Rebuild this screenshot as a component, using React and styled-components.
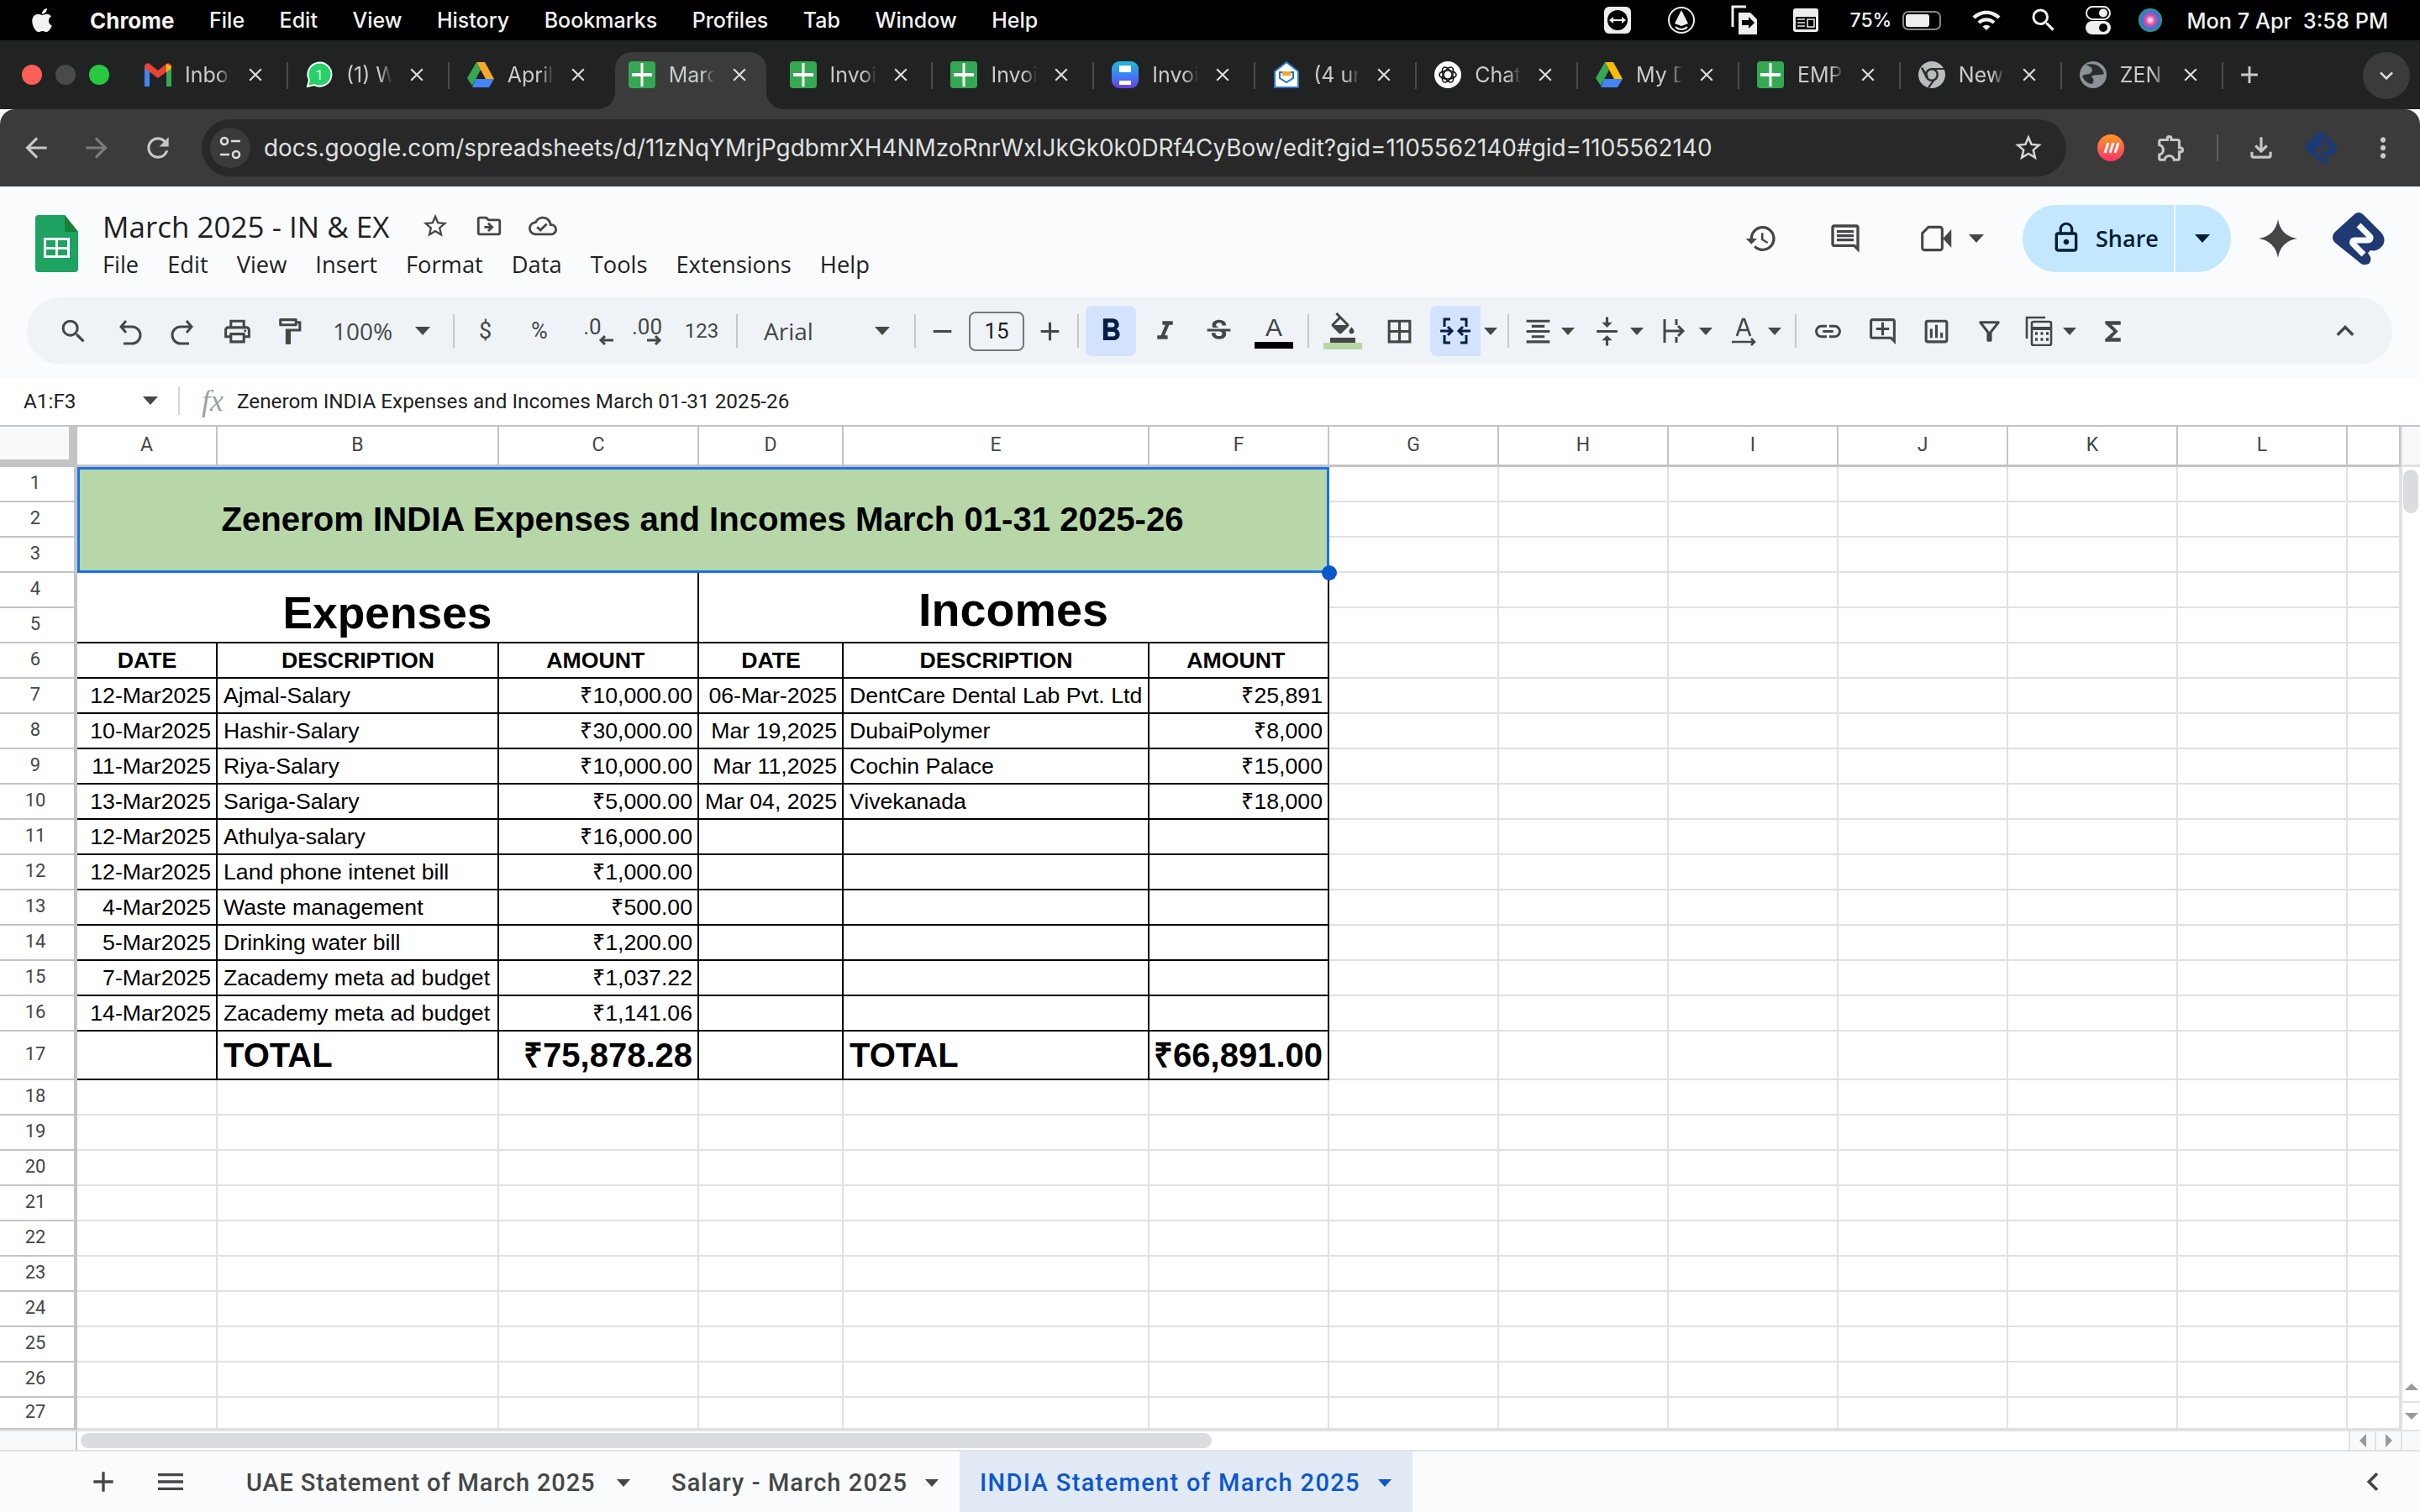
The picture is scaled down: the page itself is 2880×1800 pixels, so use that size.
import React from 'react'
import styled, { createGlobalStyle } from 'styled-components'
import { FaApple } from 'react-icons/fa'
import {
  MdSearch, MdOutlinePrint, MdOutlineFormatPaint, MdRemove, MdAdd,
  MdFormatBold, MdFormatItalic, MdStrikethroughS, MdOutlineFormatColorFill, MdBorderAll,
  MdFormatAlignCenter, MdVerticalAlignCenter, MdLink, MdOutlineAddComment, MdOutlineInsertChart,
  MdOutlineFilterAlt, MdFunctions, MdHistory, MdLockOutline, MdArrowBack,
  MdArrowForward, MdRefresh, MdStarBorder, MdMoreVert, MdOutlineFileDownload, MdOutlineExtension,
  MdKeyboardArrowUp, MdKeyboardArrowDown, MdKeyboardArrowLeft, MdClose, MdMenu,
  MdOutlineDriveFileMove, MdOutlineCloudDone, MdOutlineComment, MdWifi,
} from 'react-icons/md'

const GlobalStyle = createGlobalStyle`
  html, body { margin: 0; padding: 0; background: #fff; }
  * { box-sizing: border-box; }
`

const Page = styled.div`
  width: 2880px;
  height: 1800px;
  overflow: hidden;
  display: flex;
  flex-direction: column;
  background: #f9fbfd;
  font-family: Roboto, "Liberation Sans", sans-serif;
`

/* mac menu bar */
const MenuBar = styled.div`
  height: 48px;
  background: #000;
  color: #f2f2f2;
  display: flex;
  align-items: center;
  padding-right: 38px;
  font-family: Inter, sans-serif;
  font-size: 25px;
  font-weight: 500;
`
const AppleSlot = styled.div`
  width: 107px;
  padding-left: 34px;
  display: flex;
  font-size: 32px;
`
const MacMenu = styled.div`
  display: flex;
  gap: 41.5px;
  b { font-weight: 700; font-size: 26px; }
`
const StatusSlot = styled.div`
  width: ${p => p.$w}px;
  margin-left: ${p => p.$ml || 0}px;
  display: flex;
  justify-content: center;
  align-items: center;
`
const StatusPush = styled.div`
  margin-left: auto;
`
const StatusText = styled.div`
  margin-left: ${p => p.$ml || 0}px;
  font-size: ${p => p.$s || 25}px;
  white-space: pre;
`
const Battery = styled.div`
  width: 46px;
  height: 23px;
  margin-left: 13px;
  border: 2px solid #888;
  border-radius: 7px;
  padding: 2px;
  display: flex;
  div { width: 72%; background: #eee; border-radius: 3px; }
`

/* chrome tabs */
const TabStrip = styled.div`
  height: 82px;
  background: #212323;
  display: flex;
  align-items: flex-end;
`
const Lights = styled.div`
  width: 150px;
  height: 82px;
  padding: 0 0 0 26px;
  display: flex;
  gap: 16px;
  align-items: center;
`
const Light = styled.span`
  width: 24px;
  height: 24px;
  border-radius: 50%;
  background: ${p => p.$c};
`
const Tab = styled.div`
  position: relative;
  width: 179.9px;
  height: 68px;
  margin: 0 6px;
  padding: 0 0 14px 16px;
  display: flex;
  align-items: center;
  border-radius: 20px 20px 0 0;
  background: ${p => (p.$active ? '#3b3b3b' : 'transparent')};
  color: #c9cbcb;
  font-family: Inter, sans-serif;
  font-size: 25px;
  &::after {
    content: '';
    display: ${p => (p.$sep ? 'block' : 'none')};
    position: absolute;
    right: -7px;
    top: 12px;
    width: 2px;
    height: 32px;
    background: #4a4c4c;
  }
`
const TabCorner = styled.span`
  position: absolute;
  bottom: 0;
  ${p => (p.$right ? 'right: -20px' : 'left: -20px')};
  width: 20px;
  height: 20px;
  background: radial-gradient(circle at ${p => (p.$right ? '100% 0' : '0 0')}, #212323 19.5px, #3b3b3b 20px);
`
const TabTitle = styled.div`
  width: 55px;
  margin-left: 16px;
  white-space: nowrap;
  overflow: hidden;
  -webkit-mask-image: linear-gradient(90deg, #000 72%, transparent);
  mask-image: linear-gradient(90deg, #000 72%, transparent);
`
const TabClose = styled.div`
  margin-left: 16px;
  display: flex;
  color: #dcdcdc;
  font-size: 26px;
`
const NewTab = styled.div`
  margin-left: 6px;
  height: 82px;
  width: 52px;
  display: flex;
  align-items: center;
  justify-content: center;
  color: #c9cbcb;
  font-size: 34px;
`
const TabSearch = styled.div`
  margin-left: auto;
  margin-right: 12px;
  align-self: flex-start;
  margin-top: 14px;
  width: 56px;
  height: 56px;
  border-radius: 28px;
  background: #3b3b3b;
  color: #dcdcdc;
  font-size: 32px;
  display: flex;
  align-items: center;
  justify-content: center;
`

/* chrome address bar */
const AddressBar = styled.div`
  height: 92px;
  background: #3b3b3b;
  border-radius: 18px 18px 0 0;
  display: flex;
  align-items: center;
  padding-left: 7px;
`
const NavBtn = styled.div`
  width: ${p => p.$w}px;
  margin-left: ${p => p.$ml || 0}px;
  display: flex;
  justify-content: center;
  color: ${p => p.$c || '#c7c7c7'};
  font-size: 38px;
`
const Omnibox = styled.div`
  width: 2219px;
  height: 68px;
  margin-left: 15px;
  border-radius: 34px;
  background: #282828;
  padding: 0 26px 0 10px;
  display: flex;
  align-items: center;
  color: #dfe1e1;
  font-family: Inter, sans-serif;
  font-size: 27.9px;
`
const SiteChip = styled.div`
  width: 48px;
  height: 48px;
  border-radius: 50%;
  background: #3b3b3b;
  display: flex;
  align-items: center;
  justify-content: center;
`
const UrlText = styled.div`
  margin-left: 16px;
`
const OmniStar = styled.div`
  margin-left: auto;
  display: flex;
  font-size: 38px;
  color: #d5d5d5;
`
const ChromeSep = styled.div`
  width: 2px;
  height: 32px;
  margin-left: ${p => p.$l}px;
  background: #5f5f5f;
`

/* docs header */
const DocHeader = styled.div`
  height: 132px;
  padding-left: 42px;
  display: flex;
  align-items: flex-start;
`
const DocLogo = styled.div`
  margin-top: 34px;
  display: flex;
`
const DocTitleBlock = styled.div`
  margin-left: 29px;
  padding-top: 24px;
`
const DocTitleRow = styled.div`
  display: flex;
  align-items: center;
  height: 46px;
`
const DocTitle = styled.div`
  font-family: "Open Sans", sans-serif;
  font-size: 35px;
  color: #1f1f1f;
  width: 343px;
  white-space: nowrap;
`
const TitleIcon = styled.div`
  width: 64px;
  display: flex;
  justify-content: center;
  font-size: 34px;
  color: #444746;
  margin-left: ${p => p.$ml || 0}px;
`
const DocMenu = styled.div`
  display: flex;
  gap: 34px;
  margin-top: 2px;
  height: 40px;
  align-items: center;
  font-family: "Open Sans", sans-serif;
  font-size: 27.3px;
  color: #1f1f1f;
`
const HeadActions = styled.div`
  margin-left: auto;
  margin-top: 22px;
  height: 80px;
  padding-right: 42px;
  display: flex;
  align-items: center;
`
const HeadBtn = styled.div`
  width: ${p => p.$w || 40}px;
  margin-left: ${p => p.$ml || 0}px;
  display: flex;
  justify-content: center;
  color: #444746;
  font-size: ${p => p.$s || 44}px;
`
const Caret = styled.span`
  display: inline-block;
  flex: none;
  width: 0;
  height: 0;
  border-left: ${p => p.$s || 9}px solid transparent;
  border-right: ${p => p.$s || 9}px solid transparent;
  border-top: ${p => (p.$s || 9) + 1}px solid ${p => p.$c || '#444746'};
`
const ShareButton = styled.div`
  width: 248px;
  height: 80px;
  margin-left: 43px;
  border-radius: 40px;
  overflow: hidden;
  background: #c2e7ff;
  color: #001d35;
  display: flex;
  align-items: stretch;
`
const ShareMain = styled.div`
  width: 182px;
  padding: 0 0 2px 32px;
  display: flex;
  align-items: center;
  font-family: "Open Sans", sans-serif;
  font-size: 27px;
  font-weight: 600;
  border-right: 2px solid #f4fbff;
  svg { font-size: 40px; margin-right: 15px; }
`
const ShareCaret = styled.div`
  flex: 1;
  display: flex;
  align-items: center;
  justify-content: center;
  padding-right: 2px;
`

/* sheets toolbar */
const Toolbar = styled.div`
  height: 80px;
  margin: 0 33px 16px 32px;
  padding: 0 25px 0 17px;
  border-radius: 40px;
  background: #eff3f8;
  display: flex;
  align-items: center;
`
const ToolBtn = styled.div`
  width: ${p => p.$w}px;
  height: 60px;
  margin-left: ${p => p.$ml || 0}px;
  padding-top: ${p => p.$pt || 0}px;
  display: flex;
  align-items: center;
  justify-content: center;
  flex: none;
  font-size: ${p => p.$s || 37}px;
  color: ${p => (p.$on ? '#041e49' : '#444746')};
  background: ${p => (p.$on ? '#d3e3fd' : 'transparent')};
  border-radius: ${p => p.$r || '8px'};
`
const ToolLabel = styled.span`
  font-family: Roboto, sans-serif;
  font-size: ${p => p.$s || 27}px;
  color: #444746;
`
const ToolSelect = styled.div`
  width: ${p => p.$w}px;
  padding: 0 ${p => p.$pr}px 0 ${p => p.$pl}px;
  display: flex;
  align-items: center;
  justify-content: space-between;
  flex: none;
  font-family: "Open Sans", sans-serif;
  font-size: 28px;
  color: #444746;
`
const ToolSep = styled.div`
  width: 2px;
  height: 40px;
  flex: none;
  margin: 0 ${p => p.$r}px 0 ${p => p.$l}px;
  background: #c7c7c7;
`
const SizeBox = styled.div`
  width: 66px;
  height: 47px;
  border: 2px solid #747775;
  border-radius: 8px;
  display: flex;
  align-items: center;
  justify-content: center;
  font-family: Roboto, sans-serif;
  font-size: 26px;
  color: #1f1f1f;
`
const ColorTool = styled.div`
  display: flex;
  flex-direction: column;
  align-items: center;
  line-height: 1;
  font-size: 36px;
  color: #444746;
`
const ColorGlyph = styled.span`
  height: 34px;
  font-family: "Liberation Sans", sans-serif;
  font-size: 30px;
  line-height: 34px;
`
const ColorBar = styled.span`
  width: 46px;
  height: 8px;
  background: ${p => p.$c};
`
const Decimal = styled.div`
  display: flex;
  flex-direction: column;
  align-items: flex-end;
  padding-left: ${p => (p.$narrow ? 14 : 0)}px;
  font-family: Roboto, sans-serif;
  font-size: 26px;
  line-height: 26px;
  color: #444746;
  span { margin-right: ${p => (p.$narrow ? 14 : 0)}px; }
  svg { margin-top: -4px; }
`

/* formula bar */
const FormulaBar = styled.div`
  height: 56px;
  padding-bottom: 2px;
  background: #fff;
  display: flex;
  align-items: center;
  font-family: Roboto, sans-serif;
  font-size: 24.3px;
  color: #1f1f1f;
`
const NameBox = styled.div`
  width: 212px;
  padding: 0 24px 0 28px;
  display: flex;
  align-items: center;
  justify-content: space-between;
`
const FormulaSep = styled.div`
  width: 2px;
  height: 34px;
  background: #d5d5d5;
`
const FxMark = styled.div`
  width: 68px;
  padding-right: 16px;
  text-align: right;
  font-family: "Liberation Serif", serif;
  font-style: italic;
  font-size: 36px;
  color: #9aa0a6;
`

/* the sheet */
const SheetArea = styled.div`
  height: 1196px;
  border-top: 2px solid #c4c4c4;
  display: flex;
  background: #fff;
`
const Grid = styled.div`
  width: 2857px;
  display: grid;
  grid-template-columns: 92px 167px 335px 238px 172px 364px 214px repeat(6, 202px) 63px;
  grid-template-rows: 48px repeat(16, 42px) 58px repeat(9, 42px) 38px;
  overflow: hidden;
  font-family: "Liberation Sans", Arial, sans-serif;
  color: #000;
`
const Corner = styled.div`
  background: #f8f9fa;
  border-right: 10px solid #c4c4c4;
  border-bottom: 9px solid #c4c4c4;
`
const ColHead = styled.div`
  display: flex;
  align-items: center;
  justify-content: center;
  padding-bottom: 2px;
  background: #fff;
  border-right: 2px solid #c4c4c4;
  border-bottom: 3px solid #c4c4c4;
  font-family: Roboto, sans-serif;
  font-size: 23px;
  color: #444746;
`
const RowHead = styled.div`
  display: flex;
  align-items: center;
  justify-content: center;
  padding: 0 4px 4px 0;
  background: #fff;
  border-right: 4px solid #c4c4c4;
  border-bottom: 2px solid #c4c4c4;
  font-family: Roboto, sans-serif;
  font-size: 22px;
  color: #444746;
`
const Blank = styled.div`
  background: #fff;
  border-right: 2px solid #e1e1e1;
  border-bottom: 2px solid #e1e1e1;
`
const Cell = styled.div`
  display: flex;
  align-items: center;
  justify-content: ${p => p.$align || 'flex-start'};
  padding: 0 6px 0 7px;
  border-right: 2px solid #000;
  border-bottom: 2px solid #000;
  font-size: ${p => p.$size || 26.67}px;
  font-weight: ${p => (p.$bold ? 700 : 400)};
  line-height: 1;
  white-space: pre;
  overflow: hidden;
`
const TitleCell = styled.div`
  grid-column: span 6;
  grid-row: span 3;
  position: relative;
  display: flex;
  align-items: center;
  justify-content: center;
  padding-right: 2px;
  background: #b7d7a8;
  box-shadow: inset 0 0 0 3px #1a73e8;
  font-size: 40.15px;
  font-weight: 700;
`
const SelectHandle = styled.span`
  position: absolute;
  right: -9px;
  bottom: -9px;
  width: 18px;
  height: 18px;
  border-radius: 50%;
  background: #0b57d0;
`
const SectionCell = styled.div`
  grid-column: span 3;
  grid-row: span 2;
  display: flex;
  align-items: flex-end;
  justify-content: center;
  padding-bottom: ${p => p.$pb}px;
  border-right: 2px solid #000;
  border-bottom: 2px solid #000;
  font-size: ${p => p.$size}px;
  font-weight: 700;
  line-height: 1.15;
`
const VScroll = styled.div`
  width: 23px;
  display: flex;
  flex-direction: column;
  border-left: 2px solid #e1e1e1;
`
const VCorner = styled.div`
  height: 48px;
  background: #f8f9fa;
  border-bottom: 3px solid #e1e1e1;
`
const VThumb = styled.div`
  width: 18px;
  height: 52px;
  margin: 3px 0 0 1px;
  border-radius: 9px;
  background: #dadce0;
`
const ScrollArrow = styled.div`
  height: 34px;
  display: flex;
  align-items: center;
  justify-content: center;
  border-top: ${p => (p.$top ? '2px solid #e1e1e1' : 'none')};
  margin-top: ${p => (p.$push ? 'auto' : 0)};
`
const TriV = styled.span`
  width: 0;
  height: 0;
  border-left: 8px solid transparent;
  border-right: 8px solid transparent;
  ${p => (p.$up ? 'border-bottom' : 'border-top')}: 8px solid #9a9a9a;
`
const TriH = styled.span`
  width: 0;
  height: 0;
  border-top: 8px solid transparent;
  border-bottom: 8px solid transparent;
  ${p => (p.$left ? 'border-right' : 'border-left')}: 8px solid #9a9a9a;
`
const HScroll = styled.div`
  height: 24px;
  display: flex;
  background: #fff;
  border-top: 2px solid #e1e1e1;
`
const HStub = styled.div`
  width: 92px;
  background: #f8f9fa;
  border-right: 2px solid #c4c4c4;
`
const HThumb = styled.div`
  width: 1346px;
  height: 18px;
  margin: 2px 0 0 4px;
  border-radius: 9px;
  background: #dadce0;
`
const HArrow = styled.div`
  width: 31px;
  margin-left: ${p => (p.$push ? 'auto' : 0)};
  display: flex;
  align-items: center;
  justify-content: center;
  background: #f8f9fa;
  border-left: 2px solid #e1e1e1;
`
const HCorner = styled.div`
  width: 23px;
  background: #f8f9fa;
  border-left: 2px solid #e1e1e1;
`

/* sheet tabs */
const SheetBar = styled.div`
  height: 74px;
  border-top: 2px solid #e0e3e0;
  display: flex;
  align-items: stretch;
  font-family: Roboto, sans-serif;
  font-size: 29px;
  font-weight: 500;
  color: #444746;
`
const SheetIcon = styled.div`
  width: 60px;
  margin-left: ${p => p.$ml}px;
  display: flex;
  align-items: center;
  justify-content: center;
  font-size: 40px;
  color: #444746;
`
const SheetTab = styled.div`
  width: ${p => p.$w}px;
  margin-left: ${p => p.$ml || 0}px;
  padding: 2px 25px 0 24px;
  display: flex;
  align-items: center;
  justify-content: space-between;
  letter-spacing: ${p => p.$ls}px;
  white-space: nowrap;
  background: ${p => (p.$active ? '#e1e9f5' : 'transparent')};
  color: ${p => (p.$active ? '#0b57d0' : '#444746')};
`
const SheetCollapse = styled.div`
  margin-left: auto;
  margin-right: 34px;
  display: flex;
  align-items: center;
  font-size: 44px;
  color: #444746;
`

const SheetsFavicon = () => (
  <svg width="32" height="32" viewBox="0 0 32 32">
    <rect width="32" height="32" rx="4" fill="#34a853" />
    <path d="M4 14h24v4H4zM14.5 2h3v28h-3z" fill="#fff" />
  </svg>
)
const GmailFavicon = () => (
  <svg width="32" height="28" viewBox="0 0 32 28">
    <path d="M0 28V4l6 4v20z" fill="#4285f4" />
    <path d="M26 28V8l6-4v24z" fill="#34a853" />
    <path d="M0 6l16 12L32 6v-2c0-3-4-5-6-3L16 9 6 1C4-1 0 1 0 4z" fill="#ea4335" />
    <path d="M26 1l6 3v2L26 11z" fill="#fbbc04" />
  </svg>
)
const WhatsappFavicon = () => (
  <svg width="32" height="32" viewBox="0 0 32 32">
    <path d="M2 30l2-8a14 14 0 1 1 6 6z" fill="#25d366" stroke="#fff" strokeWidth="2" />
    <text x="16" y="22" fontSize="16" textAnchor="middle" fill="#fff" fontFamily="Roboto">1</text>
  </svg>
)
const DriveFavicon = ({ soft }) => (
  <svg width="32" height="30" viewBox="0 0 32 30">
    <path d="M11 0h10l11 20h-10z" fill={soft ? '#fbbc04' : '#f9a825'} />
    <path d="M11 0l5 9L6 28 0 19z" fill="#34a853" />
    <path d="M10 20h22l-6 10H6z" fill="#4285f4" />
  </svg>
)
const InvoiceFavicon = () => (
  <svg width="32" height="32" viewBox="0 0 32 32">
    <defs>
      <linearGradient id="invoice" x1="0" y1="0" x2="0" y2="1">
        <stop offset="0" stopColor="#22b8d6" />
        <stop offset="0.5" stopColor="#3b82f6" />
        <stop offset="1" stopColor="#6d3be8" />
      </linearGradient>
    </defs>
    <rect width="32" height="32" rx="9" fill="url(#invoice)" />
    <rect x="9" y="5" width="14" height="8" fill="#fff" />
    <rect x="9" y="23" width="14" height="5" fill="#fff" />
  </svg>
)
const MailFavicon = () => (
  <svg width="32" height="32" viewBox="0 0 32 32">
    <path d="M16 1l14 11v19H2V12z" fill="#fff" stroke="#2a73c5" strokeWidth="2" />
    <path d="M8 13h16v7l-8 5-8-5z" fill="#fff" stroke="#2a73c5" strokeWidth="2" />
    <path d="M11 12h10v5H11z" fill="#f5a623" />
  </svg>
)
const KnotFavicon = () => (
  <svg width="32" height="32" viewBox="0 0 32 32">
    <circle cx="16" cy="16" r="16" fill="#fff" />
    <g fill="none" stroke="#111" strokeWidth="1.6">
      <ellipse cx="16" cy="16" rx="10" ry="5" />
      <ellipse cx="16" cy="16" rx="10" ry="5" transform="rotate(60 16 16)" />
      <ellipse cx="16" cy="16" rx="10" ry="5" transform="rotate(120 16 16)" />
    </g>
  </svg>
)
const ChromeFavicon = () => (
  <svg width="32" height="32" viewBox="0 0 32 32">
    <circle cx="16" cy="16" r="16" fill="#b9bcbe" />
    <circle cx="16" cy="16" r="8" fill="#2b2d2d" />
    <circle cx="16" cy="16" r="5.5" fill="#b9bcbe" />
    <path d="M16 8h15v2H18zM9 20L3 8l2-1 7 11zM20 22l-7 10-2-1 7-10z" fill="#2b2d2d" />
  </svg>
)
const GlobeFavicon = () => (
  <svg width="32" height="32" viewBox="0 0 32 32">
    <circle cx="16" cy="16" r="16" fill="#8b9198" />
    <path d="M7 4c6 2 10 5 7 9s-8 1-11 5c3 6 8 9 12 9 3-4 1-7-1-9 4-3 10-1 15-3-1-5-5-9-10-11-4-1-8-1-12 0z" fill="#2b2d2d" />
  </svg>
)
const SheetsLogo = () => (
  <svg width="51" height="68" viewBox="0 0 51 68">
    <path d="M4 0h31l16 20v44a4 4 0 0 1-4 4H4a4 4 0 0 1-4-4V4a4 4 0 0 1 4-4z" fill="#1ea362" />
    <path d="M35 0l16 20H35z" fill="#188038" />
    <path d="M10 27h31v24H10z" fill="#fff" />
    <path d="M13 30h11v8H13zM27 30h11v8H27zM13 41h11v7H13zM27 41h11v7H27z" fill="#1ea362" />
  </svg>
)
const GeminiStar = () => (
  <svg width="46" height="46" viewBox="0 0 46 46">
    <path d="M23 0c2 13 10 21 23 23-13 2-21 10-23 23-2-13-10-21-23-23 13-2 21-10 23-23z" fill="#444746" />
  </svg>
)
const ZeneromLogo = ({ size = 62, color = '#1f3a72', cut = '#f9fbfd' }) => (
  <svg width={size} height={size} viewBox="0 0 62 62">
    <path d="M31 0c2 0 4 1 6 3l20 20c6 6 6 14 0 19-3 3-8 4-12 3l-3 3 3 5c1 3 0 6-2 8l-1 0c-2 2-5 2-8 0L3 36c-4-4-4-9 0-13L25 3c2-2 4-3 6-3z" fill={color} />
    <path d="M31 15l13 13c2 2 1 5-2 5H26c-2 0-3 2-2 4l13 13" fill="none" stroke={cut} strokeWidth="7" strokeLinejoin="round" />
  </svg>
)
const SiteInfoIcon = () => (
  <svg width="26" height="30" viewBox="0 0 26 30" fill="none" stroke="#ddd" strokeWidth="2.6">
    <circle cx="6" cy="7" r="4" />
    <path d="M14 7h11M1 23h11" />
    <circle cx="20" cy="23" r="4" />
  </svg>
)
const MergeIcon = () => (
  <svg width="38" height="36" viewBox="0 0 38 36" fill="none" stroke="#041e49" strokeWidth="3">
    <path d="M13 4H6v9M13 32H6v-9M25 4h7v9M25 32h7v-9" />
    <path d="M1 18h14M10 13l5 5-5 5M37 18H23M28 13l-5 5 5 5" />
  </svg>
)
const WrapIcon = () => (
  <svg width="36" height="36" viewBox="0 0 36 36" fill="none" stroke="#444746" strokeWidth="3">
    <path d="M6 4v28M20 4v7M20 25v7M6 18h22M22 12l6 6-6 6" />
  </svg>
)
const RotateIcon = () => (
  <svg width="36" height="36" viewBox="0 0 36 36" fill="none" stroke="#444746" strokeWidth="2.6">
    <path d="M10 24l7-20h2l7 20M12 17h12M4 31h27M27 27l4 4-4 4" />
  </svg>
)
const UndoIcon = ({ flip }) => (
  <svg width="32" height="34" viewBox="0 0 32 34" fill="none" stroke="#444746" strokeWidth="3" style={flip ? { transform: 'scaleX(-1)' } : undefined}>
    <path d="M12 3L6 10l6 7M6 10h13a8 8 0 0 1 0 20H9" />
  </svg>
)
const VideoIcon = () => (
  <svg width="44" height="36" viewBox="0 0 44 36">
    <path d="M11 3h15a3 3 0 0 1 3 3v24a3 3 0 0 1-3 3H6a3 3 0 0 1-3-3V11z" fill="none" stroke="#444746" strokeWidth="3.4" strokeLinejoin="round" />
    <path d="M30 18L41 6v24z" fill="#444746" />
  </svg>
)
const CalcSheetIcon = () => (
  <svg width="34" height="36" viewBox="0 0 34 36" fill="none" stroke="#444746" strokeWidth="2.6">
    <path d="M3 27V2h22" />
    <rect x="9" y="7" width="23" height="28" rx="2" />
    <path d="M9 15h23" strokeWidth="4" />
    <path d="M13 21h3M19.500 21h3M26 21h3M13 28h3M19.500 28h3M26 28h3" strokeWidth="3.4" />
  </svg>
)
const CtrlIcon = () => (
  <svg width="30" height="34" viewBox="0 0 30 34">
    <rect x="1" y="1" width="28" height="15" rx="7.5" fill="none" stroke="#eee" strokeWidth="2" />
    <circle cx="21" cy="8.5" r="5" fill="#eee" />
    <rect x="0" y="18" width="30" height="16" rx="8" fill="#eee" />
    <circle cx="21" cy="26" r="5" fill="#000" />
  </svg>
)
const RemoteIcon = () => (
  <svg width="32" height="32" viewBox="0 0 32 32">
    <rect width="32" height="32" rx="6" fill="#eee" />
    <circle cx="16" cy="16" r="12" fill="#000" />
    <path d="M6 16l5-4v3h10v-3l5 4-5 4v-3H11v3z" fill="#eee" />
  </svg>
)
const SailIcon = () => (
  <svg width="32" height="32" viewBox="0 0 32 32">
    <circle cx="16" cy="16" r="15" fill="none" stroke="#eee" strokeWidth="2" />
    <path d="M16 4l8 16-8 3-8-3z" fill="#eee" />
    <path d="M9 24c4 4 10 4 14 0" fill="none" stroke="#eee" strokeWidth="2" />
  </svg>
)
const CopyFlowIcon = () => (
  <svg width="32" height="36" viewBox="0 0 32 36">
    <path d="M2 26V2h16" fill="none" stroke="#eee" strokeWidth="3" />
    <path d="M9 9h14l8 8v18H9z" fill="#eee" />
    <path d="M13 18h8v-4l7 7-7 7v-4h-8z" fill="#000" />
  </svg>
)
const ShortcutIcon = () => (
  <svg width="30" height="28" viewBox="0 0 30 28">
    <rect width="30" height="28" rx="3" fill="#eee" />
    <path d="M3 10h24v15H3z" fill="#000" />
    <path d="M5 13h9M5 17h9M5 21h9M17 13h8v9h-8z" stroke="#eee" strokeWidth="1.5" fill="none" />
  </svg>
)
const SiriIcon = () => (
  <svg width="28" height="30" viewBox="0 0 28 30">
    <defs>
      <radialGradient id="siri">
        <stop offset="0" stopColor="#fff" />
        <stop offset="0.4" stopColor="#e04fa0" />
        <stop offset="0.75" stopColor="#3a6fd8" />
        <stop offset="1" stopColor="#24a87c" />
      </radialGradient>
    </defs>
    <circle cx="14" cy="15" r="14" fill="url(#siri)" />
  </svg>
)
const ExtensionBadge = () => (
  <svg width="32" height="32" viewBox="0 0 32 32">
    <defs>
      <linearGradient id="badge" x1="0" y1="0" x2="0" y2="1">
        <stop offset="0" stopColor="#ff9a1f" />
        <stop offset="1" stopColor="#ff2e6a" />
      </linearGradient>
    </defs>
    <circle cx="16" cy="16" r="16" fill="url(#badge)" />
    <path d="M9 22l4-12M15 22l4-12M21 22l4-12" stroke="#fff" strokeWidth="3" />
  </svg>
)
const DecimalArrow = ({ left }) => (
  <svg width="18" height="14" viewBox="0 0 18 14" fill="none" stroke="#444746" strokeWidth="3">
    <path d={left ? 'M18 7H3M8 2L3 7l5 5' : 'M0 7h15M10 2l5 5-5 5'} />
  </svg>
)

const macMenu = ['File', 'Edit', 'View', 'History', 'Bookmarks', 'Profiles', 'Tab', 'Window', 'Help']

const chromeTabs = [
  { icon: <GmailFavicon />, title: 'Inbox', sep: true },
  { icon: <WhatsappFavicon />, title: '(1) WhatsApp', sep: true },
  { icon: <DriveFavicon />, title: 'April', sep: false },
  { icon: <SheetsFavicon />, title: 'March', active: true, sep: false },
  { icon: <SheetsFavicon />, title: 'Invoice', sep: true },
  { icon: <SheetsFavicon />, title: 'Invoice', sep: true },
  { icon: <InvoiceFavicon />, title: 'Invoice', sep: true },
  { icon: <MailFavicon />, title: '(4 unread', sep: true },
  { icon: <KnotFavicon />, title: 'ChatGPT', sep: true },
  { icon: <DriveFavicon soft />, title: 'My Drive', sep: true },
  { icon: <SheetsFavicon />, title: 'EMP', sep: true },
  { icon: <ChromeFavicon />, title: 'New', sep: true },
  { icon: <GlobeFavicon />, title: 'ZEN', sep: true },
]

const docMenu = ['File', 'Edit', 'View', 'Insert', 'Format', 'Data', 'Tools', 'Extensions', 'Help']

const columns = ['A', 'B', 'C', 'D', 'E', 'F', 'G', 'H', 'I', 'J', 'K', 'L', '']
const rightBlanks = 7

const rows = [
  ['12-Mar2025', 'Ajmal-Salary', '₹10,000.00', '06-Mar-2025', 'DentCare Dental Lab Pvt. Ltd', '₹25,891'],
  ['10-Mar2025', 'Hashir-Salary', '₹30,000.00', 'Mar 19,2025', 'DubaiPolymer', '₹8,000'],
  ['11-Mar2025', 'Riya-Salary', '₹10,000.00', 'Mar 11,2025', 'Cochin Palace', '₹15,000'],
  ['13-Mar2025', 'Sariga-Salary', '₹5,000.00', 'Mar 04, 2025', 'Vivekanada', '₹18,000'],
  ['12-Mar2025', 'Athulya-salary', '₹16,000.00', '', '', ''],
  ['12-Mar2025', 'Land phone intenet bill', '₹1,000.00', '', '', ''],
  ['4-Mar2025', 'Waste management', '₹500.00', '', '', ''],
  ['5-Mar2025', 'Drinking water bill', '₹1,200.00', '', '', ''],
  ['7-Mar2025', 'Zacademy meta ad budget', '₹1,037.22', '', '', ''],
  ['14-Mar2025', 'Zacademy meta ad budget', '₹1,141.06', '', '', ''],
]

const Blanks = ({ n, from }) => Array.from({ length: n }, (_, i) => <Blank key={from + i} />)

function Sheet() {
  const out = []
  out.push(<Corner key="corner" />)
  columns.forEach((c, i) => out.push(<ColHead key={'col' + i}>{c}</ColHead>))

  for (let r = 1; r <= 5; r++) {
    out.push(<RowHead key={'r' + r}>{r}</RowHead>)
    if (r === 1) {
      out.push(
        <TitleCell key="title">
          Zenerom INDIA Expenses and Incomes March 01-31 2025-26
          <SelectHandle />
        </TitleCell>
      )
    }
    if (r === 4) {
      out.push(<SectionCell key="exp" $size={53.3} $pb={4}>Expenses</SectionCell>)
      out.push(<SectionCell key="inc" $size={55.7} $pb={6}>Incomes</SectionCell>)
    }
    out.push(<Blanks key={'b' + r} n={rightBlanks} from={0} />)
  }

  out.push(<RowHead key="r6">6</RowHead>)
  ;['DATE', 'DESCRIPTION', 'AMOUNT ', 'DATE', 'DESCRIPTION', 'AMOUNT '].forEach((h, i) =>
    out.push(<Cell key={'h' + i} $bold $align="center">{h}</Cell>)
  )
  out.push(<Blanks key="b6" n={rightBlanks} from={0} />)

  rows.forEach((row, i) => {
    out.push(<RowHead key={'r' + (i + 7)}>{i + 7}</RowHead>)
    row.forEach((v, j) => {
      const right = j === 0 || j === 2 || j === 3 || j === 5
      out.push(<Cell key={i + '-' + j} $align={right ? 'flex-end' : 'flex-start'}>{v}</Cell>)
    })
    out.push(<Blanks key={'b' + (i + 7)} n={rightBlanks} from={0} />)
  })

  out.push(<RowHead key="r17">17</RowHead>)
  out.push(<Cell key="t0" />)
  out.push(<Cell key="t1" $bold $size={40}>TOTAL</Cell>)
  out.push(<Cell key="t2" $bold $size={40} $align="flex-end">₹75,878.28</Cell>)
  out.push(<Cell key="t3" />)
  out.push(<Cell key="t4" $bold $size={40}>TOTAL</Cell>)
  out.push(<Cell key="t5" $bold $size={40} $align="flex-end">₹66,891.00</Cell>)
  out.push(<Blanks key="b17" n={rightBlanks} from={0} />)

  for (let r = 18; r <= 27; r++) {
    out.push(<RowHead key={'r' + r}>{r}</RowHead>)
    out.push(<Blanks key={'b' + r} n={13} from={0} />)
  }
  return <Grid>{out}</Grid>
}

function App() {
  return (
    <Page>
      <GlobalStyle />

      <MenuBar>
        <AppleSlot><FaApple /></AppleSlot>
        <MacMenu>
          <b>Chrome</b>
          {macMenu.map(m => <span key={m}>{m}</span>)}
        </MacMenu>
        <StatusPush />
        <StatusSlot $w={76}><RemoteIcon /></StatusSlot>
        <StatusSlot $w={76}><SailIcon /></StatusSlot>
        <StatusSlot $w={74}><CopyFlowIcon /></StatusSlot>
        <StatusSlot $w={72}><ShortcutIcon /></StatusSlot>
        <StatusText $ml={16} $s={23}>75%</StatusText>
        <Battery><div /></Battery>
        <StatusSlot $w={64} $ml={22}><MdWifi size={36} /></StatusSlot>
        <StatusSlot $w={72}><MdSearch size={36} /></StatusSlot>
        <StatusSlot $w={58}><CtrlIcon /></StatusSlot>
        <StatusSlot $w={66}><SiriIcon /></StatusSlot>
        <StatusText $ml={10} $s={25.3}>Mon 7 Apr  3:58 PM</StatusText>
      </MenuBar>

      <TabStrip>
        <Lights>
          <Light $c="#ff5f57" />
          <Light $c="#4a4a4a" />
          <Light $c="#28c840" />
        </Lights>
        {chromeTabs.map((t, i) => (
          <Tab key={i} $active={t.active} $sep={t.sep}>
            {t.active && <TabCorner />}
            {t.active && <TabCorner $right />}
            {t.icon}
            <TabTitle>{t.title}</TabTitle>
            <TabClose><MdClose /></TabClose>
          </Tab>
        ))}
        <NewTab><MdAdd /></NewTab>
        <TabSearch><MdKeyboardArrowDown /></TabSearch>
      </TabStrip>

      <AddressBar>
        <NavBtn $w={72}><MdArrowBack /></NavBtn>
        <NavBtn $w={72} $c="#7c7c7c"><MdArrowForward /></NavBtn>
        <NavBtn $w={74}><MdRefresh /></NavBtn>
        <Omnibox>
          <SiteChip><SiteInfoIcon /></SiteChip>
          <UrlText>docs.google.com/spreadsheets/d/11zNqYMrjPgdbmrXH4NMzoRnrWxIJkGk0k0DRf4CyBow/edit?gid=1105562140#gid=1105562140</UrlText>
          <OmniStar><MdStarBorder /></OmniStar>
        </Omnibox>
        <NavBtn $w={106}><ExtensionBadge /></NavBtn>
        <NavBtn $w={38}><MdOutlineExtension /></NavBtn>
        <ChromeSep $l={35} />
        <NavBtn $w={102}><MdOutlineFileDownload /></NavBtn>
        <NavBtn $w={40}><ZeneromLogo size={38} color="#1d3a78" cut="#3b3b3b" /></NavBtn>
        <NavBtn $w={40} $ml={34}><MdMoreVert /></NavBtn>
      </AddressBar>

      <DocHeader>
        <DocLogo><SheetsLogo /></DocLogo>
        <DocTitleBlock>
          <DocTitleRow>
            <DocTitle>March 2025 - IN &amp; EX</DocTitle>
            <TitleIcon $ml={21}><MdStarBorder /></TitleIcon>
            <TitleIcon><MdOutlineDriveFileMove /></TitleIcon>
            <TitleIcon><MdOutlineCloudDone /></TitleIcon>
          </DocTitleRow>
          <DocMenu>
            {docMenu.map(m => <span key={m}>{m}</span>)}
          </DocMenu>
        </DocTitleBlock>
        <HeadActions>
          <HeadBtn $s={52}><MdHistory /></HeadBtn>
          <HeadBtn $ml={60} $s={48}><MdOutlineComment /></HeadBtn>
          <HeadBtn $ml={69}><VideoIcon /></HeadBtn>
          <HeadBtn $w={24} $ml={15}><Caret /></HeadBtn>
          <ShareButton>
            <ShareMain><MdLockOutline />Share</ShareMain>
            <ShareCaret><Caret $c="#001d35" /></ShareCaret>
          </ShareButton>
          <HeadBtn $w={46} $ml={33}><GeminiStar /></HeadBtn>
          <HeadBtn $w={62} $ml={42}><ZeneromLogo /></HeadBtn>
        </HeadActions>
      </DocHeader>

      <Toolbar>
        <ToolBtn $w={76}><MdSearch /></ToolBtn>
        <ToolBtn $w={58} $pt={4}><UndoIcon /></ToolBtn>
        <ToolBtn $w={69} $pt={4}><UndoIcon flip /></ToolBtn>
        <ToolBtn $w={60}><MdOutlinePrint /></ToolBtn>
        <ToolBtn $w={64}><MdOutlineFormatPaint /></ToolBtn>
        <ToolSelect $w={154} $pl={20} $pr={18}>100%<Caret /></ToolSelect>
        <ToolSep $l={9} $r={9} />
        <ToolBtn $w={55}><ToolLabel>$</ToolLabel></ToolBtn>
        <ToolBtn $w={74}><ToolLabel>%</ToolLabel></ToolBtn>
        <ToolBtn $w={52}><Decimal $narrow><span>.0</span><DecimalArrow left /></Decimal></ToolBtn>
        <ToolBtn $w={78}><Decimal><span>.00</span><DecimalArrow /></Decimal></ToolBtn>
        <ToolBtn $w={52}><ToolLabel $s={24}>123</ToolLabel></ToolBtn>
        <ToolSep $l={15} $r={15} />
        <ToolSelect $w={186} $pl={16} $pr={20}>Arial<Caret /></ToolSelect>
        <ToolSep $l={9} $r={9} />
        <ToolBtn $w={44}><MdRemove /></ToolBtn>
        <ToolBtn $w={86}><SizeBox>15</SizeBox></ToolBtn>
        <ToolBtn $w={40}><MdAdd /></ToolBtn>
        <ToolSep $l={12.5} $r={8.5} />
        <ToolBtn $w={60} $on><MdFormatBold size={44} /></ToolBtn>
        <ToolBtn $w={68}><MdFormatItalic /></ToolBtn>
        <ToolBtn $w={60}><MdStrikethroughS /></ToolBtn>
        <ToolBtn $w={72}><ColorTool><ColorGlyph>A</ColorGlyph><ColorBar $c="#000" /></ColorTool></ToolBtn>
        <ToolSep $l={4} $r={4} />
        <ToolBtn $w={72}><ColorTool><MdOutlineFormatColorFill /><ColorBar $c="#b7d7a8" /></ColorTool></ToolBtn>
        <ToolBtn $w={62}><MdBorderAll /></ToolBtn>
        <ToolBtn $w={60} $ml={6} $on $r="8px 0 0 8px"><MergeIcon /></ToolBtn>
        <ToolBtn $w={24}><Caret $s={8} /></ToolBtn>
        <ToolSep $l={8} $r={8} />
        <ToolBtn $w={53}><MdFormatAlignCenter /></ToolBtn>
        <ToolBtn $w={18}><Caret $s={8} /></ToolBtn>
        <ToolBtn $w={54} $ml={10}><MdVerticalAlignCenter /></ToolBtn>
        <ToolBtn $w={18}><Caret $s={8} /></ToolBtn>
        <ToolBtn $w={56} $ml={8}><WrapIcon /></ToolBtn>
        <ToolBtn $w={18}><Caret $s={8} /></ToolBtn>
        <ToolBtn $w={56} $ml={8}><RotateIcon /></ToolBtn>
        <ToolBtn $w={18}><Caret $s={8} /></ToolBtn>
        <ToolSep $l={15} $r={15} />
        <ToolBtn $w={45}><MdLink /></ToolBtn>
        <ToolBtn $w={84}><MdOutlineAddComment /></ToolBtn>
        <ToolBtn $w={44}><MdOutlineInsertChart /></ToolBtn>
        <ToolBtn $w={83}><MdOutlineFilterAlt /></ToolBtn>
        <ToolBtn $w={34}><CalcSheetIcon /></ToolBtn>
        <ToolBtn $w={18} $ml={11}><Caret $s={8} /></ToolBtn>
        <ToolBtn $w={84}><MdFunctions /></ToolBtn>
        <ToolBtn $w={60} $ml={205}><MdKeyboardArrowUp size={42} /></ToolBtn>
      </Toolbar>

      <FormulaBar>
        <NameBox>A1:F3<Caret /></NameBox>
        <FormulaSep />
        <FxMark>fx</FxMark>
        <div>Zenerom INDIA Expenses and Incomes March 01-31 2025-26</div>
      </FormulaBar>

      <SheetArea>
        <Sheet />
        <VScroll>
          <VCorner />
          <VThumb />
          <ScrollArrow $push><TriV $up /></ScrollArrow>
          <ScrollArrow $top><TriV /></ScrollArrow>
        </VScroll>
      </SheetArea>

      <HScroll>
        <HStub />
        <HThumb />
        <HArrow $push><TriH $left /></HArrow>
        <HArrow><TriH /></HArrow>
        <HCorner />
      </HScroll>

      <SheetBar>
        <SheetIcon $ml={93}><MdAdd /></SheetIcon>
        <SheetIcon $ml={20}><MdMenu /></SheetIcon>
        <SheetTab $ml={36} $w={506} $ls={0.84}>UAE Statement of March 2025<Caret $s={8} /></SheetTab>
        <SheetTab $w={367} $ls={1.08}>Salary - March 2025<Caret $s={8} /></SheetTab>
        <SheetTab $active $w={539} $ls={1.35}>INDIA Statement of March 2025<Caret $s={8} $c="#0b57d0" /></SheetTab>
        <SheetCollapse><MdKeyboardArrowLeft /></SheetCollapse>
      </SheetBar>
    </Page>
  )
}

export default App
